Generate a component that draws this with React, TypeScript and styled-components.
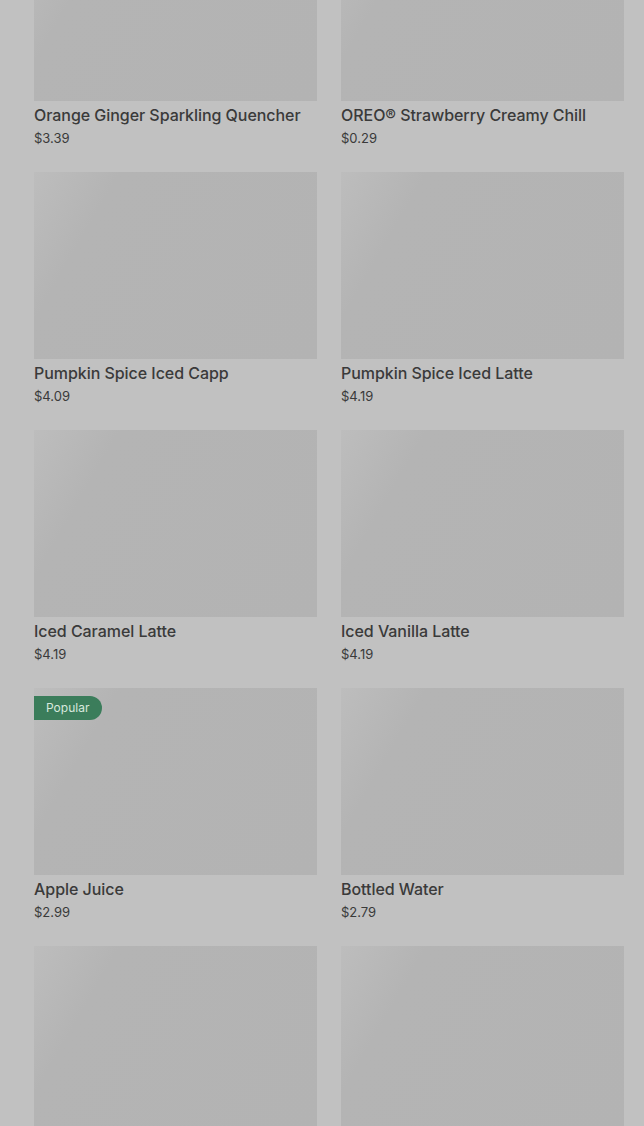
import styled, { createGlobalStyle } from 'styled-components'

const Global = createGlobalStyle`
  html, body {
    margin: 0;
    padding: 0;
    background: #c1c1c1;
    overflow: hidden;
  }
  body {
    font-family: Inter, "Liberation Sans", Arial, sans-serif;
  }
`

type Item = { name: string; price: string; badge?: string }

const items: Item[] = [
  { name: 'Orange Ginger Sparkling Quencher', price: '$3.39' },
  { name: 'OREO® Strawberry Creamy Chill', price: '$0.29' },
  { name: 'Pumpkin Spice Iced Capp', price: '$4.09' },
  { name: 'Pumpkin Spice Iced Latte', price: '$4.19' },
  { name: 'Iced Caramel Latte', price: '$4.19' },
  { name: 'Iced Vanilla Latte', price: '$4.19' },
  { name: 'Apple Juice', price: '$2.99', badge: 'Popular' },
  { name: 'Bottled Water', price: '$2.79' },
  { name: 'Hot Chocolate', price: '$2.49' },
  { name: 'Steeped Tea', price: '$1.99' },
]

const App = () => {
  return (
    <Page>
      <Global />
      <Grid>
        {items.map((it) => (
          <Card key={it.name}>
            <Thumb>{it.badge && <Badge>{it.badge}</Badge>}</Thumb>
            <Name>{it.name}</Name>
            <Price>{it.price}</Price>
          </Card>
        ))}
      </Grid>
    </Page>
  )
}

export default App

const Page = styled.div`
  width: 644px;
  height: 1126px;
  overflow: hidden;
  background: #c1c1c1;
`
const Grid = styled.div`
  margin-top: -86px;
  padding: 0 20px 0 34px;
  display: grid;
  grid-template-columns: 283px 283px;
  column-gap: 24px;
  row-gap: 24px;
`
const Card = styled.div`
  display: flex;
  flex-direction: column;
`
const Thumb = styled.div`
  position: relative;
  height: 187px;
  background: linear-gradient(120deg, #bdbdbd 0%, #b4b4b4 22%, #b3b3b3 100%);
`
const Badge = styled.span`
  position: absolute;
  left: 0;
  top: 8px;
  height: 24px;
  line-height: 24px;
  padding: 0 13px 0 12px;
  background: #3b7d5b;
  color: #d8e8de;
  font-size: 12px;
  border-radius: 0 12px 12px 0;
`
const Name = styled.div`
  margin-top: 4px;
  font-size: 16px;
  font-weight: 500;
  line-height: 20px;
  letter-spacing: -0.05px;
  color: #3a3a3a;
`
const Price = styled.div`
  margin-top: 3px;
  font-size: 13px;
  line-height: 20px;
  color: #3a3a3a;
`
